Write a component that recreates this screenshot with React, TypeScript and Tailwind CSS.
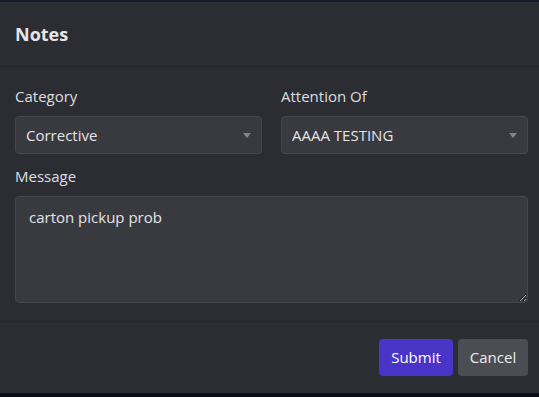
import React, { useState } from "react";

const font = { fontFamily: '"Open Sans", "Noto Sans", sans-serif' };

type SelectProps = {
  value: string;
  options: string[];
  onChange: (v: string) => void;
};

const DarkSelect: React.FC<SelectProps> = ({ value, options, onChange }) => (
  <div className="relative mt-[9px]">
    <select
      className="w-full h-[38px] appearance-none rounded-[4px] border border-[#46474d] bg-[#393a40] pl-[10px] pr-8 text-[15px] text-[#e4e4e6] outline-none"
      value={value}
      onChange={(e) => onChange(e.target.value)}
    >
      {options.map((opt) => (
        <option key={opt} value={opt}>
          {opt}
        </option>
      ))}
    </select>
    <span className="pointer-events-none absolute right-[11px] top-[17px] h-0 w-0 border-x-[4px] border-t-[5px] border-x-transparent border-t-[#7d8496]" />
  </div>
);

export default function App() {
  const [category, setCategory] = useState("Corrective");
  const [attention, setAttention] = useState("AAAA TESTING");
  const [message, setMessage] = useState("carton pickup prob");

  return (
    <div className="w-[539px] h-[397px] flex flex-col bg-[#0d0c18] overflow-hidden" style={font}>
      <div className="h-[2px] bg-[#141c2c]" />
      <div className="flex flex-col bg-[#2c2d33] h-[391px]">
        <div className="h-[65px] flex items-center px-[15px] border-b border-[#25262b]">
          <h1 className="text-[18px] font-bold text-[#e6e6e8]">Notes</h1>
        </div>

        <div className="pl-[15px] pr-[11px] pt-[19px] pb-[18px] border-b border-[#25262b]">
          <div className="grid grid-cols-2 gap-[19px]">
            <div>
              <label className="block h-[21px] leading-[21px] text-[15px] text-[#dedee0]">
                Category
              </label>
              <DarkSelect
                value={category}
                options={["Corrective", "Preventive", "General"]}
                onChange={setCategory}
              />
            </div>
            <div>
              <label className="block h-[21px] leading-[21px] text-[15px] text-[#dedee0]">
                Attention Of
              </label>
              <DarkSelect
                value={attention}
                options={["AAAA TESTING", "Maintenance", "Supervisor"]}
                onChange={setAttention}
              />
            </div>
          </div>

          <label className="block mt-[12px] h-[21px] leading-[21px] text-[15px] text-[#dedee0]">
            Message
          </label>
          <textarea
            className="block mt-[9px] w-full h-[107px] rounded-[4px] border border-[#46474d] bg-[#393a40] px-[13px] py-[9px] text-[15px] text-[#e4e4e6] outline-none"
            value={message}
            onChange={(e) => setMessage(e.target.value)}
          />
        </div>

        <div className="flex flex-1 items-center justify-end gap-[5px] pr-[11px]">
          <button className="h-[37px] w-[74px] rounded-[4px] bg-[#4834c6] text-[15px] text-white">
            Submit
          </button>
          <button className="h-[37px] w-[70px] rounded-[4px] bg-[#4c4d52] text-[15px] text-[#ececee]">
            Cancel
          </button>
        </div>
      </div>
    </div>
  );
}
